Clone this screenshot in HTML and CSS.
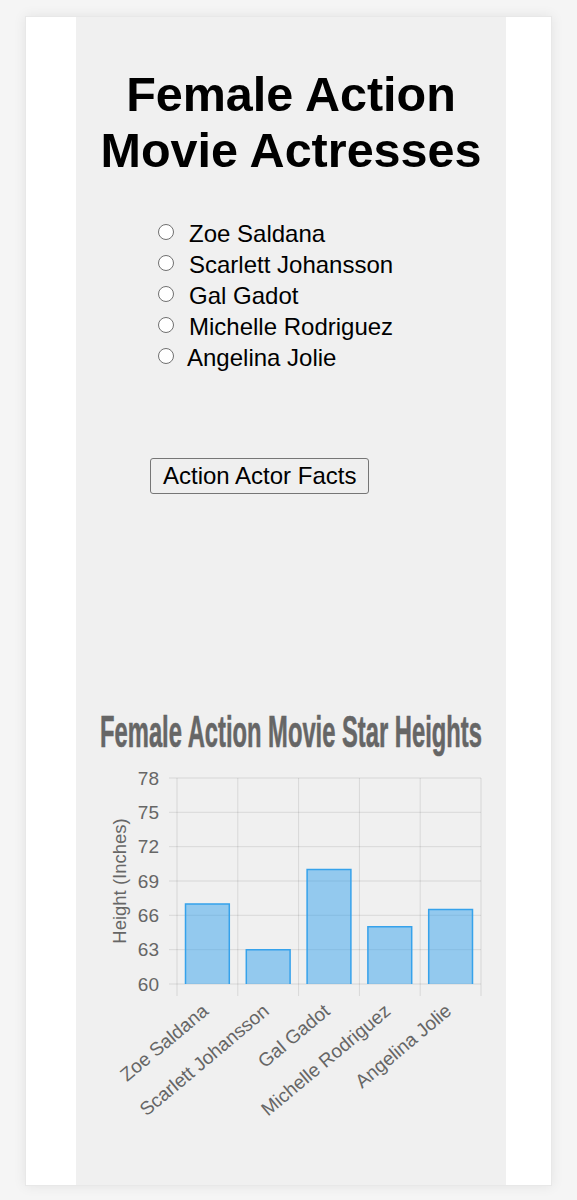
FILE: index.html
```html
<html>
  <head>
    <title>Female Action Movie Actresses</title>
    <link rel="stylesheet" href="styles.css">
  </head>
  <body>
    <div id="page">
      <div id="mainFrame">
        <h1>Female Action<br />Movie Actresses</h1>
        <form class="options">
          <label><input type="radio" name="actress" value="zoe" />Zoe Saldana</label>
          <label><input type="radio" name="actress" value="scarlett" />Scarlett Johansson</label>
          <label><input type="radio" name="actress" value="gal" />Gal Gadot</label>
          <label><input type="radio" name="actress" value="michelle" />Michelle Rodriguez</label>
          <label class="last"><input type="radio" name="actress" value="angelina" />Angelina Jolie</label>
        </form>
        <button class="facts" type="button">Action Actor Facts</button>
        <svg class="chart" width="430" height="420" viewBox="0 0 430 420">
          <g transform="translate(215 47) scale(0.54 1)">
            <text class="title" x="0" y="0">Female Action Movie Star Heights</text>
          </g>
          <!-- horizontal grid, 60..78 step 3 -->
          <g class="grid">
            <line x1="93" y1="78" x2="405" y2="78" />
            <line x1="93" y1="112.3" x2="405" y2="112.3" />
            <line x1="93" y1="146.7" x2="405" y2="146.7" />
            <line x1="93" y1="181" x2="405" y2="181" />
            <line x1="93" y1="215.3" x2="405" y2="215.3" />
            <line x1="93" y1="249.7" x2="405" y2="249.7" />
            <line x1="93" y1="284" x2="405" y2="284" />
            <line x1="101" y1="78" x2="101" y2="296" />
            <line x1="161.8" y1="78" x2="161.8" y2="296" />
            <line x1="222.6" y1="78" x2="222.6" y2="296" />
            <line x1="283.4" y1="78" x2="283.4" y2="296" />
            <line x1="344.2" y1="78" x2="344.2" y2="296" />
            <line x1="405" y1="78" x2="405" y2="296" />
          </g>
          <g class="ticks">
            <text x="83" y="78">78</text>
            <text x="83" y="112.3">75</text>
            <text x="83" y="146.7">72</text>
            <text x="83" y="181">69</text>
            <text x="83" y="215.3">66</text>
            <text x="83" y="249.7">63</text>
            <text x="83" y="284">60</text>
          </g>
          <text class="axis-label" transform="translate(50 181) rotate(-90)">Height (Inches)</text>
          <g class="bars">
            <rect x="109.5" y="203.9" width="43.8" height="80.1" />
            <path d="M109.5 284 V203.9 H153.3 V284" />
            <rect x="170.3" y="249.7" width="43.8" height="34.3" />
            <path d="M170.3 284 V249.7 H214.1 V284" />
            <rect x="231.1" y="169.6" width="43.8" height="114.4" />
            <path d="M231.1 284 V169.6 H274.9 V284" />
            <rect x="291.9" y="226.8" width="43.8" height="57.2" />
            <path d="M291.9 284 V226.8 H335.7 V284" />
            <rect x="352.7" y="209.6" width="43.8" height="74.4" />
            <path d="M352.7 284 V209.6 H396.5 V284" />
          </g>
          <g class="labels">
            <text transform="translate(133.5 313) rotate(-40)">Zoe Saldana</text>
            <text transform="translate(194.3 313) rotate(-40)">Scarlett Johansson</text>
            <text transform="translate(255.1 313) rotate(-40)">Gal Gadot</text>
            <text transform="translate(315.9 313) rotate(-40)">Michelle Rodriguez</text>
            <text transform="translate(376.7 313) rotate(-40)">Angelina Jolie</text>
          </g>
        </svg>
      </div>
    </div>
  </body>
</html>
```

FILE: styles.css
```css
body {
  margin: 0px;
  background-color: #F5F5F5;
  font-family: "Liberation Sans", Arial, sans-serif;
}

#page {
  margin: 16px 25px 0px 25px;
  height: 1170px;
  padding-left: 50px;
  background-color: #FFFFFF;
  border: 1px solid #E8E8E8;
  box-shadow: 0px 0px 12px rgba(0, 0, 0, 0.08);
  box-sizing: border-box;
}

#mainFrame {
  width: 430px;
  height: 100%;
  background-color: #F0F0F0;
  overflow: hidden;
}

h1 {
  margin: 49px 0px 0px 0px;
  font-size: 48.5px;
  line-height: 56px;
  text-align: center;
  color: #000000;
}

.options {
  margin: 40px 0px 0px 0px;
  padding-left: 82px;
  font-size: 24px;
  line-height: 31px;
}

.options label {
  display: block;
}

.options input {
  appearance: none;
  -webkit-appearance: none;
  box-sizing: border-box;
  width: 16px;
  height: 16px;
  margin: 0px 15px 0px 0px;
  vertical-align: 2px;
  border: 1.3px solid #707070;
  border-radius: 50%;
  background-color: #FFFFFF;
}

.options .last input {
  margin-right: 13px;
}

.facts {
  display: block;
  margin: 85px 0px 0px 74px;
  padding: 3px 12px;
  font-family: "Liberation Sans", Arial, sans-serif;
  font-size: 24px;
  color: #000000;
  background-color: #EFEFEF;
  border: 1px solid #767676;
  border-radius: 3px;
}

.chart {
  display: block;
  margin-top: 206px;
  font-family: "Liberation Sans", Arial, sans-serif;
}

.chart .title {
  font-size: 44px;
  font-weight: bold;
  fill: #666666;
  stroke: #666666;
  stroke-width: 0.6;
  text-anchor: middle;
}

.chart .grid line {
  stroke: rgba(0, 0, 0, 0.1);
  stroke-width: 1;
}

.chart .ticks text {
  font-size: 19px;
  fill: #666666;
  text-anchor: end;
  dominant-baseline: central;
}

.chart .axis-label {
  font-size: 18.5px;
  fill: #666666;
  text-anchor: middle;
}

.chart .bars rect {
  fill: rgba(54, 162, 235, 0.5);
}

.chart .bars path {
  fill: none;
  stroke: rgb(54, 162, 235);
  stroke-width: 1.5;
}

.chart .labels text {
  font-size: 19px;
  fill: #666666;
  text-anchor: end;
}
```
